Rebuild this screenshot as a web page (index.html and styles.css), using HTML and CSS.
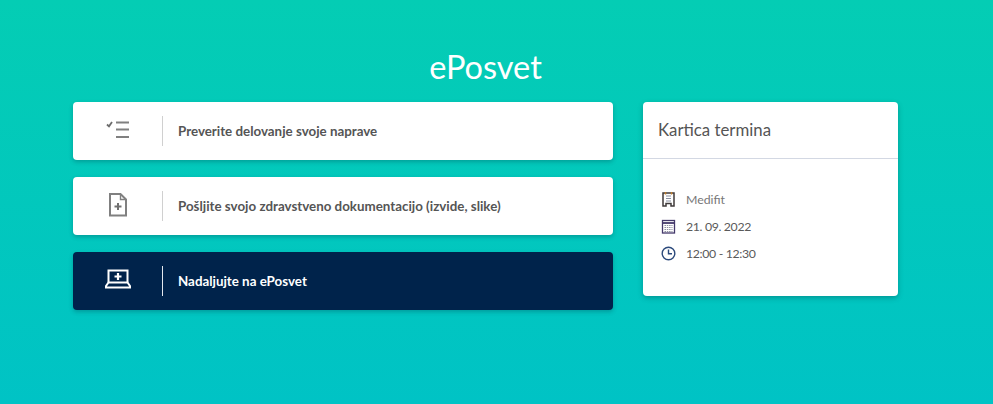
FILE: index.html
```html
<!DOCTYPE html>
<html lang="sl">
<head>
<meta charset="utf-8">
<title>ePosvet</title>
<link rel="stylesheet" href="styles.css">
</head>
<body>
<main class="page">
  <h1 class="title">ePosvet</h1>
  <div class="columns">
    <div class="steps">
      <a class="step">
        <span class="step-icon">
          <svg width="24" height="22" viewBox="0 0 24 22" fill="none" stroke="#808080"><path d="M1 4.500 3 6.300 6 2" stroke="#6c6c6c" stroke-width="1.800"/><path d="M10 2.500h13M10 9.500h13M10 17h13" stroke-width="2.200"/></svg>
        </span>
        <span class="step-label">Preverite delovanje svoje naprave</span>
      </a>
      <a class="step">
        <span class="step-icon">
          <svg width="20" height="26" viewBox="0 0 20 26" fill="none" stroke="#808080" stroke-width="2"><path d="M2 1h10.500L18 6.500V22.500H2Z"/><path d="M12.500 1v5.500H18" stroke-width="1.400"/><path d="M10 10v7M6.500 13.500h7" stroke="#707070"/></svg>
        </span>
        <span class="step-label">Pošljite svojo zdravstveno dokumentacijo (izvide, slike)</span>
      </a>
      <a class="step step-dark">
        <span class="step-icon">
          <svg width="26" height="24" viewBox="0 0 26 24" fill="none" stroke="#fff" stroke-width="2"><path d="M3.500 13.500V1.500h19v12"/><path d="M3.500 13.500h19l2.500 3.500v1.500H1V17Z"/><path d="M13 4v7M9.500 7.500h7" stroke-width="2.200"/></svg>
        </span>
        <span class="step-label">Nadaljujte na ePosvet</span>
      </a>
    </div>
    <aside class="card">
      <h2 class="card-title">Kartica termina</h2>
      <ul class="facts">
        <li class="fact">
          <svg width="14" height="15" viewBox="0 0 14 15" fill="none"><path d="M1.500 1h11v13H9.500v-2.500h-5V14h-3Z" stroke="#3f3a3a" stroke-width="1.500"/><path d="M4.500 4h5M4.500 6.500h5M4.500 9h5" stroke="#8a8fa0"/><path d="M4 0v2.500M10 0v2.500" stroke="#c07f2e" stroke-width="1.400"/></svg>
          <span class="fact-muted">Medifit</span>
        </li>
        <li class="fact">
          <svg width="14" height="15" viewBox="0 0 14 15" fill="none"><rect x="1" y="1.500" width="12" height="12.500" stroke="#43386a" stroke-width="1.300"/><path d="M1 4h12" stroke="#43386a" stroke-width="1.800"/><path d="M3 6.500h8M3 8.500h8M3 10.500h8M3 12.500h8" stroke="#8f8fa0" stroke-dasharray="1.500 .8"/></svg>
          <span class="fact-num">21. 09. 2022</span>
        </li>
        <li class="fact">
          <svg width="15" height="15" viewBox="0 0 15 15" fill="none" stroke="#2c4a7c" stroke-width="1.400"><circle cx="7.500" cy="7.500" r="6.300"/><path d="M7.500 3.500v4.200h3.500"/></svg>
          <span class="fact-num">12:00 - 12:30</span>
        </li>
      </ul>
    </aside>
  </div>
</main>
</body>
</html>
```
FILE: styles.css
```css
* { box-sizing: border-box; }
html, body { height: 100%; }
body {
  margin: 0;
  font-family: "Lato", "Noto Sans", sans-serif;
  color: #555;
  background: linear-gradient(180deg, #04cdb4 0%, #00c3c5 100%);
  overflow: hidden;
}
.page { width: 825px; margin-left: 73px; padding-top: 45px; }
.title {
  margin: 0 0 13px;
  text-align: center;
  font-size: 32.500px;
  line-height: 44px;
  font-weight: 400;
  color: #fff;
}
.columns { display: flex; gap: 30px; align-items: flex-start; }
.steps { width: 540px; display: flex; flex-direction: column; gap: 17px; }
.step {
  height: 58px;
  display: flex;
  align-items: center;
  background: #fff;
  border-radius: 4px;
  box-shadow: 0 2px 4px rgba(0, 60, 70, .3);
  color: #555;
}
.step-icon {
  width: 90px;
  height: 30px;
  margin-right: 15px;
  display: flex;
  align-items: center;
  justify-content: center;
  border-right: 1px solid #d0d0d0;
}
.step-label { font-size: 13.350px; font-weight: 700; }
.step-dark { background: #00234b; color: #fff; }
.step-dark .step-icon { border-right-color: #e4e8ee; }
.card {
  width: 255px;
  height: 194px;
  background: #fff;
  border-radius: 4px;
  box-shadow: 0 2px 5px rgba(0, 60, 70, .35);
}
.card-title {
  margin: 0;
  height: 57px;
  padding: 0 15px;
  line-height: 56px;
  font-size: 16.800px;
  font-weight: 400;
  color: #555;
  border-bottom: 1px solid #d3d8e3;
}
.facts { list-style: none; margin: 0; padding: 27px 0 0 18px; }
.fact {
  height: 27px;
  display: flex;
  align-items: center;
  gap: 10px;
  font-size: 12.300px;
  color: #5a5a5a;
}
.fact svg { flex: none; width: 15px; }
.fact-muted { color: #777; }
.fact-num { letter-spacing: -.35px; }
```
